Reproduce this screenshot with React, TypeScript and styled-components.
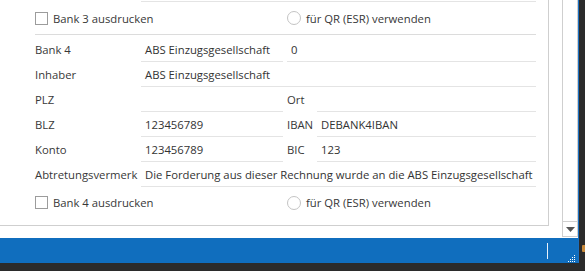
import React from 'react';
import styled, { createGlobalStyle } from 'styled-components';

const GlobalStyle = createGlobalStyle`
  html, body {
    margin: 0;
    padding: 0;
    overflow: hidden;
    background: #2b2b2b;
  }
  body {
    font-family: "Open Sans", "Noto Sans", sans-serif;
    font-size: 11.3px;
    color: #333;
  }
`

const Desktop = styled.div`
  width: 585px;
  height: 271px;
  display: flex;
  background: #2b2b2b;
`

const DesktopStrip = styled.div`
  flex: 1;
  padding-top: 245px;
  display: flex;
  justify-content: flex-end;
`

const DesktopIcon = styled.div`
  width: 3px;
  height: 7px;
  background: #c8893a;
  border-radius: 1px 0 0 1px;
`

const Window = styled.div`
  width: 578px;
  height: 263px;
  border-right: 1px solid #1a70c2;
  display: flex;
  flex-direction: column;
  background: #fff;
`

const Main = styled.div`
  height: 238px;
  display: flex;
`

const Panel = styled.div`
  width: 548px;
  height: 225px;
  border-right: 1px solid #cfcfcf;
  border-bottom: 1px solid #cfcfcf;
  overflow: hidden;
`

// scrolled down a little: the previous bank's last field sits just above the top edge
const PanelContent = styled.div`
  margin-top: -23px;
  padding: 0 12px 0 35px;
`

const Row = styled.div`
  display: grid;
  grid-template-columns: 106px 142px 4px 30px 1fr;
  height: 25px;
`

const CheckRow = styled(Row)<{ $h: number }>`
  height: ${p => p.$h}px;
  align-items: center;
`

const Label = styled.div<{ $col?: number }>`
  grid-column: ${p => p.$col ?? 1};
  line-height: 25px;
  white-space: nowrap;
  color: #383838;
`

const Field = styled.div<{ $col: string }>`
  grid-column: ${p => p.$col};
  height: 24px;
  line-height: 25px;
  padding-left: 4px;
  border-bottom: 1px solid #e4e4e4;
  white-space: nowrap;
  overflow: hidden;
  color: #333;
`

const Separator = styled.div`
  height: 1px;
  background: #dcdcdc;
  margin-bottom: 2px;
`

const Option = styled.label<{ $col: string }>`
  grid-column: ${p => p.$col};
  display: flex;
  align-items: center;
  gap: 5px;
  color: #383838;
`

const Box = styled.span`
  width: 11px;
  height: 11px;
  border: 1px solid #9c9c9c;
  background: #fff;
`

const Radio = styled.span`
  width: 12px;
  height: 12px;
  border: 1px solid #c4c4c4;
  border-radius: 50%;
  background: #fff;
`

const Gutter = styled.div`
  width: 13px;
`

const Scrollbar = styled.div`
  width: 14px;
  height: 237px;
  border-left: 1px solid #cfcfcf;
  border-right: 1px solid #cfcfcf;
  display: flex;
  flex-direction: column;
`

const Track = styled.div`
  flex: 1;
`

const DownButton = styled.div`
  height: 14px;
  border-top: 1px solid #cfcfcf;
  border-bottom: 1px solid #cfcfcf;
  display: flex;
  align-items: center;
  justify-content: center;
`

const StatusBar = styled.div`
  height: 25px;
  background: #106ebe;
  display: flex;
  align-items: center;
`

const StatusSep = styled.div`
  margin-left: 547px;
  width: 1px;
  height: 16px;
  background: #e8f1fa;
`

const Grip = styled.div`
  margin-left: 19px;
  margin-top: 14px;
`

function CheckLine({ h, text }: { h: number; text: string }) {
  return (
    <CheckRow $h={h}>
      <Option $col="1 / 3">
        <Box />
        {text}
      </Option>
      <Option $col="4 / 6">
        <Radio />
        für QR (ESR) verwenden
      </Option>
    </CheckRow>
  )
}

export default function App() {
  return (
    <>
      <GlobalStyle />
      <Desktop>
        <Window>
          <Main>
            <Panel>
              <PanelContent>
                <Row>
                  <Field $col="2 / 6" />
                </Row>
                <CheckLine h={32} text="Bank 3 ausdrucken" />
                <Separator />
                <Row>
                  <Label>Bank 4</Label>
                  <Field $col="2">ABS Einzugsgesellschaft</Field>
                  <Field $col="4 / 6">0</Field>
                </Row>
                <Row>
                  <Label>Inhaber</Label>
                  <Field $col="2 / 6">ABS Einzugsgesellschaft</Field>
                </Row>
                <Row>
                  <Label>PLZ</Label>
                  <Field $col="2" />
                  <Label $col={4}>Ort</Label>
                  <Field $col="5" />
                </Row>
                <Row>
                  <Label>BLZ</Label>
                  <Field $col="2">123456789</Field>
                  <Label $col={4}>IBAN</Label>
                  <Field $col="5">DEBANK4IBAN</Field>
                </Row>
                <Row>
                  <Label>Konto</Label>
                  <Field $col="2">123456789</Field>
                  <Label $col={4}>BIC</Label>
                  <Field $col="5">123</Field>
                </Row>
                <Row>
                  <Label>Abtretungsvermerk</Label>
                  <Field $col="2 / 6">
                    Die Forderung aus dieser Rechnung wurde an die ABS Einzugsgesellschaft
                  </Field>
                </Row>
                <CheckLine h={31} text="Bank 4 ausdrucken" />
              </PanelContent>
            </Panel>
            <Gutter />
            <Scrollbar>
              <Track />
              <DownButton>
                <svg width="9" height="5" viewBox="0 0 9 5">
                  <path d="M0 0h9L4.5 5z" fill="#555" />
                </svg>
              </DownButton>
            </Scrollbar>
          </Main>
          <StatusBar>
            <StatusSep />
            <Grip>
              <svg width="9" height="7" viewBox="0 0 9 7">
                {[[7, 0], [5, 2], [7, 2], [3, 4], [5, 4], [7, 4], [1, 6], [3, 6], [5, 6], [7, 6]].map(([x, y]) => (
                  <rect key={`${x}-${y}`} x={x} y={y} width="1" height="1" fill="#fff" />
                ))}
              </svg>
            </Grip>
          </StatusBar>
        </Window>
        <DesktopStrip>
          <DesktopIcon />
        </DesktopStrip>
      </Desktop>
    </>
  )
}
